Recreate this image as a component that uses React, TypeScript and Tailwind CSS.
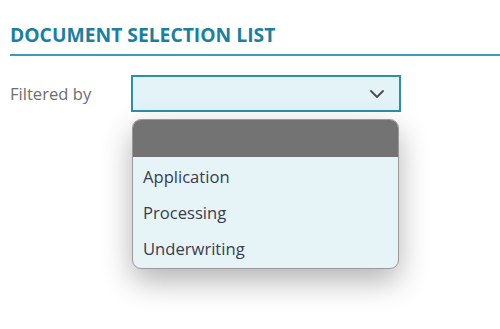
import { ChevronDown } from "lucide-react";

const options = ["Application", "Processing", "Underwriting"];

export default function App() {
  return (
    <div className="h-[329px] w-[500px] overflow-hidden bg-white pl-[10px] pt-[21px] font-['Open_Sans',sans-serif]">
      <h1 className="text-[19.3px] font-bold uppercase leading-[28px] text-[#1b7fa1]">Document Selection List</h1>
      <div className="mt-[5px] h-[2px] bg-[#3d9bb8]" />

      <div className="mt-[19px] flex items-start">
        <label className="w-[121px] pt-[7px] text-[16.6px] text-[#6e6e6e]">Filtered by</label>
        <div className="relative">
          <div className="flex h-[37px] w-[270px] items-center justify-end border-2 border-[#2d8fab] bg-[#e4f3f7] pr-[10px]">
            <ChevronDown className="h-[24px] w-[24px] text-[#4a4a4a]" strokeWidth={1.8} />
          </div>
          <div className="absolute left-[1px] top-[44px] w-[267px] overflow-hidden rounded-[9px] border border-[#9a9a9a] bg-[#e6f4f8] shadow-[0_12px_30px_rgba(0,0,0,0.3)]">
            <div className="h-[37px] bg-[#737373]" />
            <ul className="pb-[3px]">
              {options.map((option) => (
                <li key={option} className="flex h-[36px] items-center px-[10px] pt-[5px] text-[16.6px] text-[#3b3b4d]">
                  {option}
                </li>
              ))}
            </ul>
          </div>
        </div>
      </div>
    </div>
  );
}
